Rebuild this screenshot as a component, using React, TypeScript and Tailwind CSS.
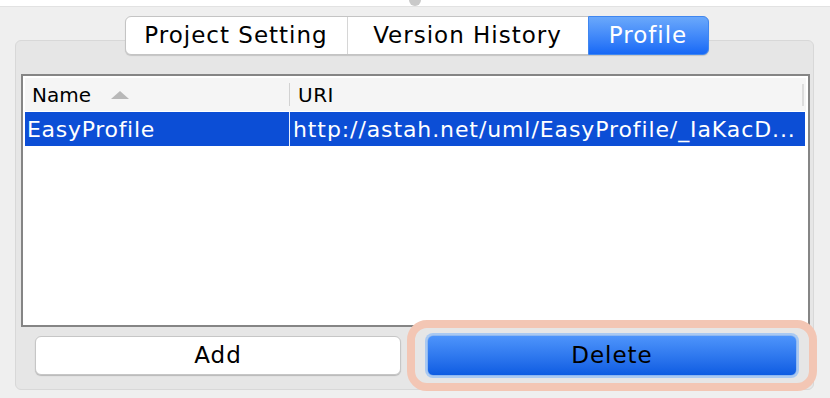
import React from "react";

// Tab header for the project properties dialog
const tabs = [
  { label: "Project Setting", width: "w-[221px]", active: false },
  { label: "Version History", width: "w-[241px]", active: false },
  { label: "Profile", width: "w-[121px]", active: true },
];

const App: React.FC = () => {
  return (
    <div className="relative w-[830px] h-[398px] overflow-hidden bg-[#efefef] font-['DejaVu_Sans',sans-serif] text-black">
      {/* top strip with slider knob */}
      <div className="h-[7px] bg-white border-b border-[#e2e2e2]" />
      <div className="absolute left-[409px] -top-[6px] w-[12px] h-[12px] rounded-full bg-[#c9c9c9]" />

      {/* tabs */}
      <div className="relative z-10 mt-[9px] flex justify-center pl-[3px]">
        <div className="flex h-[39px] rounded-[6px] border border-[#c4c4c4] bg-white shadow-[0_1px_1px_rgba(0,0,0,0.15)]">
          {tabs.map((t, i) => (
            <div
              key={t.label}
              className={`${t.width} flex items-center justify-center text-[23px] tracking-[1px] ${
                t.active
                  ? "bg-gradient-to-b from-[#6aa8fb] to-[#1668f6] text-white rounded-r-[6px] -my-px -mr-px border border-[#3f86f0]"
                  : ""
              } ${i > 0 && !t.active ? "border-l border-[#d6d6d6]" : ""}`}
            >
              {t.label}
            </div>
          ))}
        </div>
      </div>

      {/* panel */}
      <div className="-mt-[15px] ml-[15px] w-[799px] h-[350px] rounded-[6px] border border-[#d8d8d8] bg-[#e6e6e6] flex flex-col">
        <div className="mt-[33px] ml-[5px] mr-[3px] h-[253px] border-2 border-[#858585] bg-white p-[2px] flex flex-col">
          {/* header */}
          <div className="flex h-[33px] bg-[#f5f5f5] text-[20px] items-center">
            <div className="w-[264px] flex items-center pl-[7px] h-full">
              <span>Name</span>
              <svg className="ml-[20px]" width="18" height="8" viewBox="0 0 18 8">
                <polygon points="9,0 18,8 0,8" fill="#b8b8b8" />
              </svg>
            </div>
            <div className="w-px h-[23px] bg-[#d2d2d2]" />
            <div className="flex-1 pl-[8px] tracking-[0.5px]">URI</div>
            <div className="w-[2px] h-[22px] bg-[#dcdcdc] mr-[2px]" />
          </div>
          {/* selected row */}
          <div className="mt-px flex h-[34px] bg-[#0c4ed6] text-white text-[22px] tracking-[0.7px] items-center mr-[1px]">
            <div className="w-[264px] pl-[2px]">EasyProfile</div>
            <div className="w-px h-full bg-[#e8eefc]" />
            <div className="flex-1 pl-[3px] whitespace-nowrap overflow-hidden tracking-[0.9px]">
              http://astah.net/uml/EasyProfile/_IaKacD...
            </div>
          </div>
          <div className="flex-1" />
        </div>

        {/* buttons */}
        <div className="mt-[9px] flex pl-[19px] pr-[16px] gap-[26px]">
          <button className="w-[366px] h-[39px] rounded-[6px] border border-[#c6c6c6] bg-white text-[23px] tracking-[1px] shadow-[0_1px_1px_rgba(0,0,0,0.2)]">
            Add
          </button>
          <button className="w-[370px] h-[41px] -mt-px rounded-[6px] border border-[#8fb8f0] bg-gradient-to-b from-[#4d94fb] to-[#0d5ce2] text-[23px] tracking-[1px] shadow-[0_0_0_2px_#a9c9f2]">
            Delete
          </button>
        </div>
      </div>

      {/* focus ring annotation */}
      <div className="absolute left-[407px] top-[320px] w-[410px] h-[71px] rounded-[20px] border-[8px] border-[#f3c6b4]" />
    </div>
  );
};

export default App;
